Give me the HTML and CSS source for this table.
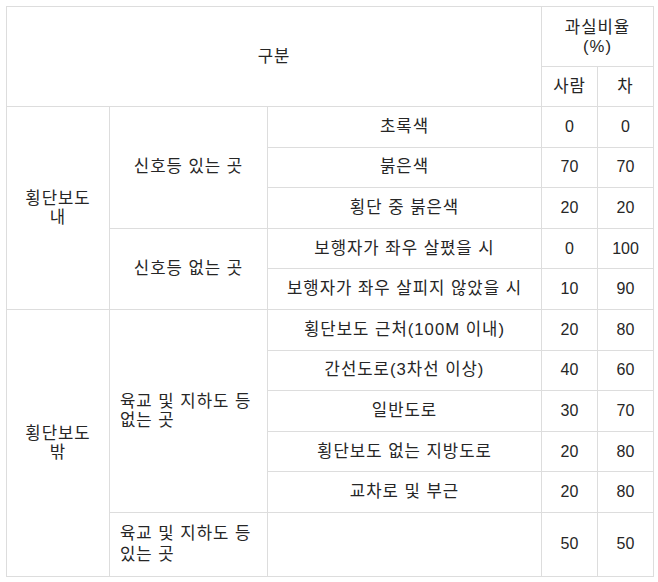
FILE: index.html
```html
<!DOCTYPE html>
<html lang="ko">
<head>
<meta charset="utf-8">
<title>과실비율</title>
<link rel="stylesheet" href="styles.css">
</head>
<body>
<table class="ratio">
  <colgroup>
    <col class="c1"><col class="c2"><col class="c3"><col class="c4"><col class="c5">
  </colgroup>
  <thead>
    <tr class="h1">
      <th colspan="3" rowspan="2" class="txt">구분</th>
      <th colspan="2" class="txt ml">과실비율<br>(%)</th>
    </tr>
    <tr class="h2">
      <th class="txt">사람</th>
      <th class="txt">차</th>
    </tr>
  </thead>
  <tbody>
    <tr class="r">
      <td rowspan="5" class="txt ml">횡단보도<br>내</td>
      <td rowspan="3" class="txt">신호등 있는 곳</td>
      <td class="txt">초록색</td>
      <td>0</td><td>0</td>
    </tr>
    <tr class="r">
      <td class="txt">붉은색</td>
      <td>70</td><td>70</td>
    </tr>
    <tr class="r">
      <td class="txt">횡단 중 붉은색</td>
      <td>20</td><td>20</td>
    </tr>
    <tr class="r">
      <td rowspan="2" class="txt">신호등 없는 곳</td>
      <td class="txt">보행자가 좌우 살폈을 시</td>
      <td>0</td><td>100</td>
    </tr>
    <tr class="r">
      <td class="txt">보행자가 좌우 살피지 않았을 시</td>
      <td>10</td><td>90</td>
    </tr>
    <tr class="r">
      <td rowspan="6" class="txt ml">횡단보도<br>밖</td>
      <td rowspan="5" class="txt ml left">육교 및 지하도 등<br>없는 곳</td>
      <td class="txt">횡단보도 근처(100M 이내)</td>
      <td>20</td><td>80</td>
    </tr>
    <tr class="r">
      <td class="txt">간선도로(3차선 이상)</td>
      <td>40</td><td>60</td>
    </tr>
    <tr class="r">
      <td class="txt">일반도로</td>
      <td>30</td><td>70</td>
    </tr>
    <tr class="r">
      <td class="txt">횡단보도 없는 지방도로</td>
      <td>20</td><td>80</td>
    </tr>
    <tr class="r">
      <td class="txt">교차로 및 부근</td>
      <td>20</td><td>80</td>
    </tr>
    <tr class="last">
      <td class="txt ml2 left">육교 및 지하도 등<br>있는 곳</td>
      <td></td>
      <td>50</td><td>50</td>
    </tr>
  </tbody>
</table>
</body>
</html>
```
FILE: styles.css
```css
html, body {
  margin: 0;
  padding: 0;
  background: #ffffff;
}
body {
  padding: 6px 0 0 6px;
  font-family: "Liberation Sans", "Noto Sans CJK KR", sans-serif;
  font-size: 16px;
  color: #262626;
}
.ratio {
  border-collapse: collapse;
  table-layout: fixed;
  width: 647px;
}
.c1 { width: 103px; }
.c2 { width: 158px; }
.c3 { width: 274px; }
.c4 { width: 56px; }
.c5 { width: 56px; }
.ratio th,
.ratio td {
  border: 1px solid #dddddd;
  padding: 0 4px;
  text-align: center;
  vertical-align: middle;
  font-weight: normal;
  line-height: 22px;
}
.ratio .txt { font-size: 16.7px; letter-spacing: 1px; }
.ratio .ml { line-height: 19px; }
.ratio .ml2 { line-height: 21px; }
.ratio .left { text-align: left; padding-left: 10px; }
.h1 { height: 60px; }
.h2 { height: 40px; }
.r { height: 40.6px; }
.last { height: 64px; }
```
